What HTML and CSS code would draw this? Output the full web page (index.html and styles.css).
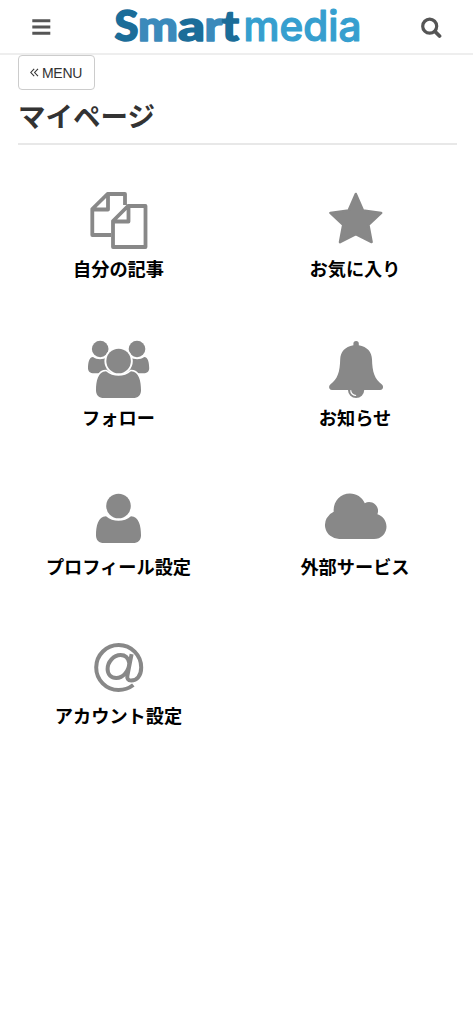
FILE: index.html
```html
<!DOCTYPE html>
<html lang="ja">
<head>
<meta charset="utf-8">
<meta name="viewport" content="width=device-width, initial-scale=1">
<title>マイページ</title>
<link rel="stylesheet" href="styles.css">
</head>
<body>
<header class="topbar">
  <svg class="bar-icon" width="20" height="18" viewBox="0 0 20 18" aria-label="menu"><path class="dark" d="M1.300 1.200h18v3h-18zM1.300 7.500h18v3h-18zM1.300 13.700h18v3h-18z"/></svg>
  <svg class="logo" width="256" height="53" viewBox="109 0 256 53" aria-label="Smart media">
    <g class="smart">
      <text x="114.500" y="41.300" textLength="24" lengthAdjust="spacingAndGlyphs">S</text>
      <text class="mid" x="138" y="41.300" textLength="40" lengthAdjust="spacingAndGlyphs">m</text>
      <text x="178" y="41.300" textLength="27" lengthAdjust="spacingAndGlyphs">a</text>
      <text class="mid" x="204.500" y="41.300" textLength="18" lengthAdjust="spacingAndGlyphs">r</text>
      <text x="222" y="41.300" textLength="17" lengthAdjust="spacingAndGlyphs">t</text>
    </g>
    <text class="media" x="243.500" y="41.300" textLength="118" lengthAdjust="spacingAndGlyphs">media</text>
  </svg>
  <svg class="bar-icon" width="22" height="22" viewBox="0 0 22 22" aria-label="search"><circle class="lens" cx="9.7" cy="9.2" r="7"/><path class="lens handle" d="M15 14.500l4.500 4.500"/></svg>
</header>
<main>
  <a class="menu-button"><svg width="9" height="9" viewBox="0 0 9 9"><path class="chevron" d="M4.200.8L.8 4.500l3.400 3.700M8 .8L4.600 4.500 8 8.200"/></svg><span>MENU</span></a>
  <h1 class="title">マイページ</h1>
  <nav class="grid">
    <a class="tile">
      <svg class="icon" viewBox="86 188 64 64"><path class="line" d="M111 235H92.300v-26l15.200-15H125v11M92.300 209.500h15.700V194"/><path class="line paper" d="M113 221v26h32.500v-41H128zM113 221.500h15.500V206"/></svg>
      <span>自分の記事</span>
    </a>
    <a class="tile">
      <svg class="icon" viewBox="322.500 188 64 64"><path class="fill round" d="M355.300 194l7.200 16.500 18.200 2.400-12.800 12 3.200 17.200-15.800-8-15.800 8 3.200-17.200-12.800-12 18.200-2.400z"/></svg>
      <span>お気に入り</span>
    </a>
    <a class="tile">
      <svg class="icon" viewBox="86 337 64 64"><circle class="fill" cx="100.200" cy="349" r="8.300"/><circle class="fill" cx="137" cy="349" r="8.300"/><path class="fill" d="M93 357c4 3 10 3 14 0l5 3v13.300H94c-4 0-6-2-6-5 0-5 1-11.300 5-11.300zM144.200 357c-4 3-10 3-14 0l-5 3v13.300h18c4 0 6-2 6-5 0-5-1-11.300-5-11.300z"/><circle class="gap-ring" cx="118.600" cy="361" r="14.200"/><path class="fill halo" d="M106 371.200c7 6.200 18 6.200 25 0 8 0 10 10 10 19 0 5-3 7.800-8 7.800h-29c-5 0-8-2.800-8-7.800 0-9 2-19 10-19z"/><circle class="fill" cx="118.600" cy="361" r="12.300"/></svg>
      <span>フォロー</span>
    </a>
    <a class="tile">
      <svg class="icon" viewBox="322.500 337 64 64"><path class="fill" d="M352.900 345.300V343.600a2.700 2.700 0 0 1 5.400 0v1.700c8.500 1.300 13 7 13.200 14 .3 13 2.500 19.500 9.900 25.200 2.200 2 1.100 5.500-1.700 5.500h-16a8.100 8.100 0 0 1-16.200 0h-16c-2.800 0-3.900-3.500-1.700-5.500 7.400-5.700 9.600-12.200 9.900-25.200.2-7 4.700-12.700 13.200-14z"/><path class="shine" d="M350.200 390.200c0 3 2.400 5.300 5.400 5.300"/></svg>
      <span>お知らせ</span>
    </a>
    <a class="tile">
      <svg class="icon" viewBox="86 486 64 64"><circle class="fill" cx="118.500" cy="506" r="12.300"/><path class="fill" d="M106 516.200c7 6.200 18 6.200 25 0 8 0 10 10 10 19 0 5-3 7.800-8 7.800h-29c-5 0-8-2.800-8-7.800 0-9 2-19 10-19z"/></svg>
      <span>プロフィール設定</span>
    </a>
    <a class="tile">
      <svg class="icon" viewBox="322.500 486 64 64"><path class="fill" d="M338.800 539a14.200 14.200 0 0 1-5.600-27.300c-.8-10 6.500-18.200 16.200-18.200 6.600 0 12 3.600 14.900 9.700 6.500-4 15.800 2.400 12.600 11.100 5.200 1.500 9.100 6.500 9.100 12.400a12.400 12.400 0 0 1-12.400 12.300z"/></svg>
      <span>外部サービス</span>
    </a>
    <a class="tile">
      <svg class="icon" viewBox="86 635 64 64"><path class="at" d="M133.300 685c-4.200 3.200-9 5-14.800 5a22.500 22.500 0 1 1 22.700-22.500c0 8.500-4.500 13-10 13-3.200 0-4.400-2-3.800-5l4.200-21.300M129.300 663c-1-5-4-8-8.700-8-7 0-13 7-13 14 0 5.500 3.600 9 8.600 9 7 0 12.700-7 13.100-15z"/></svg>
      <span>アカウント設定</span>
    </a>
  </nav>
</main>
</body>
</html>
```

FILE: styles.css
```css
* { box-sizing: border-box; }
body {
  margin: 0;
  background: #fff;
  color: #333;
  font-family: "Liberation Sans", "Noto Sans CJK JP", sans-serif;
}
.topbar {
  display: flex;
  justify-content: space-between;
  height: 55px;
  padding: 0 31px;
  border-bottom: 2px solid #eee;
}
.bar-icon { margin-top: 18px; }
.topbar .bar-icon:last-child { margin-top: 17px; }
.dark { fill: #555; }
.lens { fill: none; stroke: #555; stroke-width: 3.2; }
.handle { stroke-width: 3.8; stroke-linecap: round; }
.logo { margin-left: 2px; }
.smart text {
  font: 900 42px Lato, sans-serif;
  fill: #1b6d99;
  stroke: #1b6d99;
  stroke-width: 1.5;
  stroke-linejoin: round;
}
.smart .mid { fill: #3b8abb; stroke: #3b8abb; }
.media {
  font: 500 42px Inter, sans-serif;
  fill: #369fcf;
  stroke: #369fcf;
  stroke-width: 1.2;
  stroke-linejoin: round;
}
main { padding: 0 16px 0 18px; }
.menu-button {
  display: flex;
  align-items: center;
  gap: 3px;
  width: 77px;
  height: 35px;
  padding-left: 11px;
  border: 1px solid #ccc;
  border-radius: 4px;
  font-size: 14px;
  letter-spacing: -0.3px;
}
.chevron { fill: none; stroke: #333; stroke-width: 1.1; }
.title {
  height: 55px;
  margin: 0;
  padding-top: 8px;
  border-bottom: 2px solid #e8e8e8;
  font-size: 27.5px;
  line-height: 40px;
  font-weight: 700;
}
.grid {
  display: grid;
  grid-template-columns: 236px 237px;
  grid-auto-rows: 149px;
  margin: 43px -16px 0 -18px;
}
.tile {
  display: flex;
  flex-direction: column;
  align-items: center;
  color: #000;
  font-size: 18.2px;
  line-height: 26px;
  font-weight: 700;
}
.tile span { margin: 5px 0 0 1px; }
.icon { width: 64px; height: 64px; }
.fill { fill: #888; }
.round { stroke: #888; stroke-width: 2.5; stroke-linejoin: round; }
.line { fill: none; stroke: #888; stroke-width: 3.8; stroke-linejoin: round; }
.paper { fill: #fff; }
.gap-ring { fill: #fff; }
.halo { stroke: #fff; stroke-width: 3; paint-order: stroke; }
.shine { fill: none; stroke: #fff; stroke-width: 1.2; }
.at { fill: none; stroke: #888; stroke-width: 4; stroke-linejoin: round; }
```
